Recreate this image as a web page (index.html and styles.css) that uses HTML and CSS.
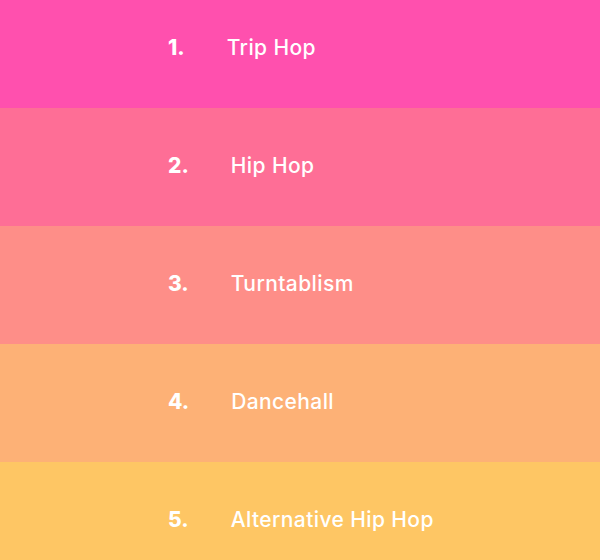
FILE: index.html
```html
<!DOCTYPE html>
<html lang="en">
<head>
  <meta charset="UTF-8">
  <meta name="viewport" content="width=device-width, initial-scale=1.0">
  <title>Top Genres</title>
  <link rel="stylesheet" href="styles.css">
</head>
<body>
  <ol class="genre-list">
    <li class="genre genre-1"><span class="rank">1.</span><span class="name">Trip Hop</span></li>
    <li class="genre genre-2"><span class="rank">2.</span><span class="name">Hip Hop</span></li>
    <li class="genre genre-3"><span class="rank">3.</span><span class="name">Turntablism</span></li>
    <li class="genre genre-4"><span class="rank">4.</span><span class="name">Dancehall</span></li>
    <li class="genre genre-5"><span class="rank">5.</span><span class="name">Alternative Hip Hop</span></li>
  </ol>
</body>
</html>
```
FILE: styles.css
```css
* {
  margin: 0;
  padding: 0;
}
body {
  font-family: Inter, "Open Sans", sans-serif;
  width: 600px;
  height: 560px;
  overflow: hidden;
  color: white;
}
.genre-list {
  list-style: none;
  margin-top: -10px;
}
.genre {
  height: 118px;
  box-sizing: border-box;
  display: flex;
  align-items: center;
  padding-left: 168px;
  padding-bottom: 3px;
  font-size: 21px;
}
.rank {
  font-weight: 800;
  margin-right: 42px;
}
.name {
  font-weight: 500;
  letter-spacing: 0.4px;
}
.genre-1 { background: #ff50ae; }
.genre-2 { background: #fe6e96; }
.genre-3 { background: #fe8e88; }
.genre-4 { background: #fdb176; }
.genre-5 { background: #fec664; }
```
